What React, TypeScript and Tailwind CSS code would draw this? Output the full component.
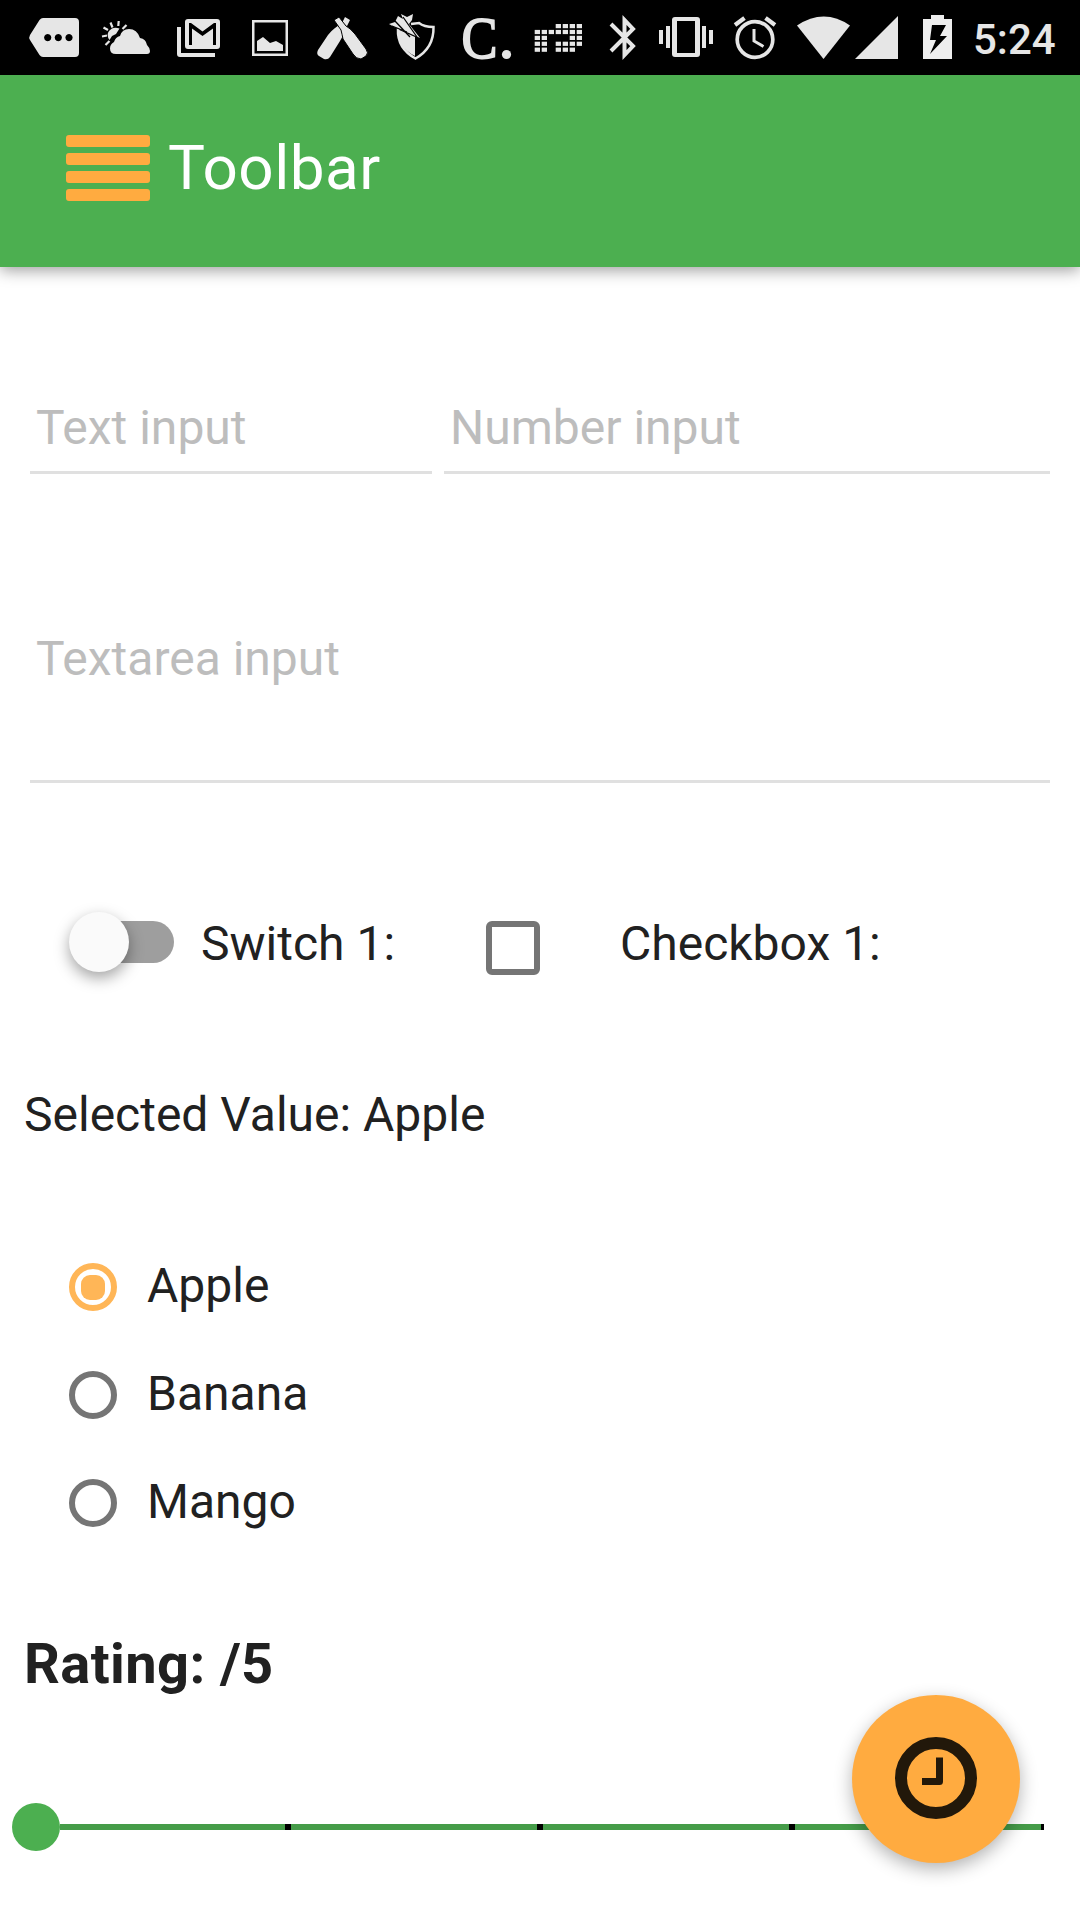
import React from "react";

const C = "#e6e6e6";

const dots: number[][] = [
  [0, 0, 0, 1, 1, 1, 1],
  [1, 1, 1, 1, 1, 1, 1],
  [1, 1, 0, 0, 0, 1, 1],
  [1, 1, 0, 1, 1, 1, 1],
  [1, 1, 0, 1, 1, 1, 0],
];

function StatusBar() {
  return (
    <header className="flex h-[75px] bg-black">
      <svg width="968" height="75" viewBox="0 0 968 75" fill={C} className="shrink-0">
        {/* more notifications */}
        <path fillRule="evenodd" d="M43 18H75a4 4 0 0 1 4 4V53a4 4 0 0 1-4 4H43q-2 0-3.500-2L30 40q-1.500-2.500 0-5L39.500 20Q41 18 43 18ZM47.700 34a3.600 3.600 0 1 0 .01 0ZM58.300 34a3.600 3.600 0 1 0 .01 0ZM69 34a3.600 3.600 0 1 0 .01 0Z" />
        {/* weather */}
        <path d="M109.500 40Q106 35 109 31Q113 26 119.500 28.500L116 34L112 36Z" />
        <path d="M116 54Q110 54 110 48.500Q110 44 114 42Q115.500 37 120 36Q122 29 129 29Q137 29 140 38Q146 39 147 45Q150 48 150 51Q150 54 147 54Z" />
        <path d="M102 36.500L107 35.500M103.500 27.500L108 30M110.500 22.500L112.500 27.500M118.700 21L118.300 26M126.500 25L122.500 29M105.500 45L109.500 41" stroke={C} strokeWidth="2.200" fill="none" />
        {/* mail */}
        <path fillRule="evenodd" d="M188 19H217a3 3 0 0 1 3 3V46a3 3 0 0 1-3 3H188a3 3 0 0 1-3-3V22a3 3 0 0 1 3-3ZM189 23V45H192V28.500L202.500 36L213 28.500V45H216V23H214L202.500 31.500L191 23Z" />
        <path d="M177 27H181V53H215V57H180a3 3 0 0 1-3-3Z" />
        {/* picture */}
        <path fillRule="evenodd" d="M252 20H288V56H252ZM254.500 22.500V53.500H285.500V22.500Z" />
        <path d="M257 41L263 37L270 43L276 41L283 45V51H257Z" />
        {/* crossed bottles */}
        <path d="M345 17L350 20L345 30Q344 35 340 41L330 57Q328 60 324 59L319 56Q316 54 318 50L328 35Q331 31 335 28L342 23Z" />
        <path d="M334 20L339 17L346 26Q350 28 355 34L366 49Q369 53 366 56L361 59Q356 59 353 54L343 39Q342 34 341 30Z" stroke="#000" strokeWidth="1" />
        {/* shield with arrows */}
        <path d="M398 29Q397 48 415.500 58.500Q434 48 433.500 27Q424 27 419 23L411 24" stroke={C} strokeWidth="2.500" fill="none" />
        <path d="M397 29L415 37V56Q398 48 397 29Z" />
        <path d="M389 24L395 22L398 16L403 19L401 14L407 17L413 14L412 20L409 24L420 38L409 33L396 28Z" />
        <path d="M395 21L410 37M403 17L417 37M392 26L407 32" stroke="#000" strokeWidth="1.300" fill="none" />
        {/* lettermark */}
        <text x="461.500" y="58.300" fontFamily="Liberation Serif" fontSize="60" textLength="36" lengthAdjust="spacingAndGlyphs" stroke={C} strokeWidth="1.800">C</text>
        <circle cx="506.500" cy="54.500" r="4.600" />
        {/* dotted mark */}
        {dots.map((r, y) => r.map((v, x) => v ? <rect key={`${y}-${x}`} x={534.700 + x * 7} y={24 + y * 5.900} width="5.300" height="4.200" /> : null))}
        {/* bluetooth */}
        <path d="M611 24L633 46L624.500 55V20L633 29L611 51" fill="none" stroke={C} strokeWidth="4" />
        {/* vibrate */}
        <path fillRule="evenodd" d="M675 17H697a3 3 0 0 1 3 3V54a3 3 0 0 1-3 3H675a3 3 0 0 1-3-3V20a3 3 0 0 1 3-3ZM677 21V53H695V21Z" />
        <path d="M659 30H663V44H659ZM666 26H670V48H666ZM702 26H706V48H702ZM709 30H713V44H709Z" />
        {/* alarm */}
        <g fill="none" stroke={C}><circle cx="755" cy="39.500" r="17.800" strokeWidth="3.700" /><path d="M754 29V41L763.500 46.500" strokeWidth="3" /><path d="M735 25L744.500 18M775 25L765.500 18" strokeWidth="4.200" /></g>
        {/* wifi and signal */}
        <path d="M797 25.500Q824 7.500 850 25.500L823.500 59Z" />
        <path d="M898 16V59H855Z" />
        {/* battery */}
        <path fill="#eee" fillRule="evenodd" d="M931 15H944V19H952V59H923V19H931ZM932 25L930 40H936L930 54L947 36H940L946 25Z" />
      </svg>
      <div className="pt-[12px] pl-[5px] text-[42px] leading-[56px] font-medium text-[#e6e6e6]">5:24</div>
    </header>
  );
}

function Field({ label, className }: { label: string; className: string }) {
  return <div className={`border-b-[3px] border-[#e0e0e0] pt-[1px] pl-[6px] text-[#bdbdbd] ${className}`}>{label}</div>;
}

function Radio({ label, checked }: { label: string; checked?: boolean }) {
  return (
    <div className="flex h-[48px] items-center">
      <span className={`flex size-[48px] items-center justify-center rounded-full border-[6px] ${checked ? "border-[#ffb657]" : "border-[#757575]"}`}>
        {checked && <span className="h-[25px] w-[24px] rounded-[9px] bg-[#ffb657]" />}
      </span>
      <span className="pb-[2px] pl-[30px] leading-[56px]">{label}</span>
    </div>
  );
}

export default function App() {
  return (
    <div className="relative flex h-[1920px] w-[1080px] flex-col overflow-hidden bg-white font-[Roboto,sans-serif] text-[48px] leading-[56px] text-[#212121]">
      <StatusBar />
      <div className="flex h-[192px] gap-[18px] bg-[#4caf50] pt-[60px] pl-[66px] shadow-[0_3px_15px_rgba(0,0,0,0.4)]">
        <div className="flex w-[84px] flex-col gap-[6px]">
          {[0, 1, 2, 3].map((i) => <span key={i} className="h-[12px] rounded-[3px] bg-[#ffab40]" />)}
        </div>
        <h1 className="-mt-[3px] text-[62px] leading-[72px] tracking-[0.5px] text-white">Toolbar</h1>
      </div>

      <div className="mx-[30px] mt-[132px] flex gap-[12px]">
        <Field label="Text input" className="h-[75px] w-[402px]" />
        <Field label="Number input" className="h-[75px] flex-1" />
      </div>
      <Field label="Textarea input" className="mx-[30px] mt-[156px] h-[153px]" />

      <div className="mt-[128px] flex h-[64px] pl-[69px]">
        <div className="relative h-[64px] w-[105px]">
          <span className="absolute top-[10px] right-0 h-[42px] w-[102px] rounded-full bg-[#9e9e9e]" />
          <span className="absolute top-[1px] left-0 size-[60px] rounded-full bg-[#fafafa] shadow-[0_6px_15px_rgba(0,0,0,0.36)]" />
        </div>
        <span className="w-[312px] pt-[5px] pl-[27px]">Switch 1:</span>
        <span className="mt-[10px] size-[54px] rounded-[6px] border-[6px] border-[#757575]" />
        <span className="pt-[5px] pl-[80px]">Checkbox 1:</span>
      </div>

      <p className="mt-[112px] pl-[24px]">Selected Value: Apple</p>

      <div className="mt-[120px] flex flex-col gap-[60px] pl-[69px]">
        <Radio label="Apple" checked />
        <Radio label="Banana" />
        <Radio label="Mango" />
      </div>

      <h2 className="mt-[104px] pl-[24px] text-[56px] leading-[66px] font-bold tracking-[0.4px]">Rating: /5</h2>

      <div className="mt-[106px] ml-[12px] flex h-[48px] w-[1032px] items-center">
        <span className="size-[48px] rounded-full bg-[#4caf50]" />
        <span className="flex h-[6px] flex-1 bg-[#459c49] pl-[225px]">
          <span className="mr-[246px] w-[6px] bg-black" />
          <span className="mr-[246px] w-[6px] bg-black" />
          <span className="mr-[246px] w-[6px] bg-black" />
          <span className="w-[3px] bg-black" />
        </span>
      </div>

      <button className="absolute top-[1695px] left-[852px] flex size-[168px] items-center justify-center rounded-full bg-[#ffab40] shadow-[0_6px_18px_rgba(0,0,0,0.3)]">
        <svg width="84" height="84" viewBox="0 0 84 84" fill="none" stroke="#22180a" className="-mt-[2px]">
          <circle cx="42" cy="42" r="35" strokeWidth="12" />
          <path d="M45.500 21.500V45.500H28" strokeWidth="7" strokeLinejoin="round" />
        </svg>
      </button>
    </div>
  );
}
